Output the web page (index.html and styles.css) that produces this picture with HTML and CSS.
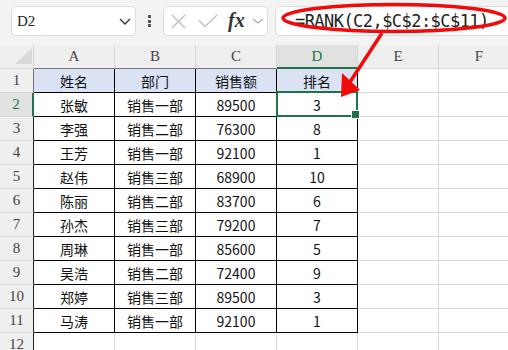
FILE: index.html
```html
<!DOCTYPE html>
<html lang="zh-CN">
<head>
<meta charset="utf-8">
<title>RANK</title>
<link rel="stylesheet" href="styles.css">
</head>
<body>
<div class="app">
  <div class="toolbar">
    <div class="namebox">
      <span class="ref">D2</span>
      <svg class="chev" width="12" height="7" viewBox="0 0 12 7"><polyline points="1,1 6,6 11,1" fill="none" stroke="#333" stroke-width="1.3"/></svg>
    </div>
    <div class="dots"><i></i><i></i><i></i></div>
    <div class="fxbox">
      <svg class="cancel" width="15" height="15" viewBox="0 0 15 15"><path d="M1 1L14 14M14 1L1 14" stroke="#bdbdbd" stroke-width="1.4" fill="none"/></svg>
      <svg class="check" width="20" height="14" viewBox="0 0 20 14"><polyline points="1,6.5 7,12.5 19,1" fill="none" stroke="#c2c2c2" stroke-width="1.5"/></svg>
      <span class="fx">fx</span>
      <svg class="chev-s" width="12" height="6" viewBox="0 0 12 6"><polyline points="1,1 6,5 11,1" fill="none" stroke="#a8a8a8" stroke-width="1.2"/></svg>
    </div>
    <div class="formula">=RANK(C2,$C$2:$C$11)</div>
  </div>

  <div class="sheet">
    <div class="corner"><span class="tri"></span></div>
    <div class="colh">A</div><div class="colh">B</div><div class="colh">C</div><div class="colh sel">D</div><div class="colh">E</div><div class="colh">F</div>

    <div class="rowh r1">1</div>
    <div class="c th">姓名</div><div class="c th">部门</div><div class="c th">销售额</div><div class="c th">排名</div><div class="e"></div><div class="e"></div>

    <div class="rowh sel">2</div>
    <div class="c">张敏</div><div class="c">销售一部</div><div class="c">89500</div><div class="c active">3</div><div class="e"></div><div class="e"></div>

    <div class="rowh">3</div>
    <div class="c">李强</div><div class="c">销售二部</div><div class="c">76300</div><div class="c">8</div><div class="e"></div><div class="e"></div>

    <div class="rowh">4</div>
    <div class="c">王芳</div><div class="c">销售一部</div><div class="c">92100</div><div class="c">1</div><div class="e"></div><div class="e"></div>

    <div class="rowh">5</div>
    <div class="c">赵伟</div><div class="c">销售三部</div><div class="c">68900</div><div class="c">10</div><div class="e"></div><div class="e"></div>

    <div class="rowh">6</div>
    <div class="c">陈丽</div><div class="c">销售二部</div><div class="c">83700</div><div class="c">6</div><div class="e"></div><div class="e"></div>

    <div class="rowh">7</div>
    <div class="c">孙杰</div><div class="c">销售三部</div><div class="c">79200</div><div class="c">7</div><div class="e"></div><div class="e"></div>

    <div class="rowh">8</div>
    <div class="c">周琳</div><div class="c">销售一部</div><div class="c">85600</div><div class="c">5</div><div class="e"></div><div class="e"></div>

    <div class="rowh">9</div>
    <div class="c">吴浩</div><div class="c">销售二部</div><div class="c">72400</div><div class="c">9</div><div class="e"></div><div class="e"></div>

    <div class="rowh">10</div>
    <div class="c">郑婷</div><div class="c">销售三部</div><div class="c">89500</div><div class="c">3</div><div class="e"></div><div class="e"></div>

    <div class="rowh">11</div>
    <div class="c">马涛</div><div class="c">销售一部</div><div class="c">92100</div><div class="c">1</div><div class="e"></div><div class="e"></div>

    <div class="rowh">12</div>
    <div class="e"></div><div class="e"></div><div class="e"></div><div class="e"></div><div class="e"></div><div class="e"></div>
  </div>

  <svg class="annot" width="508" height="350" viewBox="0 0 508 350">
    <ellipse cx="394" cy="18" rx="111" ry="13.5" fill="none" stroke="#f20a0a" stroke-width="3.5"/>
    <line x1="382" y1="33" x2="350" y2="82" stroke="#f20a0a" stroke-width="3.5"/>
    <polygon points="341,97 342,73 360,90" fill="#f20a0a"/>
  </svg>
</div>
</body>
</html>
```

FILE: styles.css
```css
* { box-sizing: border-box; }

html, body {
  margin: 0;
  padding: 0;
  background: #f3f3f3;
}

.app {
  position: relative;
  width: 508px;
  height: 350px;
  overflow: hidden;
  background: #f3f3f3;
}

/* formula bar */
.toolbar {
  height: 45px;
  display: flex;
  align-items: flex-start;
  padding: 6px 0 0 11px;
  white-space: nowrap;
}

.namebox {
  width: 125px;
  height: 30px;
  background: #fff;
  border: 1px solid #dcdcdc;
  border-radius: 5px;
  display: flex;
  align-items: center;
  justify-content: space-between;
  padding: 0 4px 0 5px;
  flex: none;
}

.ref {
  font-family: "Liberation Serif", serif;
  font-size: 15px;
  color: #222;
}

.dots {
  width: 27px;
  height: 30px;
  display: flex;
  flex-direction: column;
  align-items: center;
  justify-content: center;
  gap: 1.7px;
  flex: none;
}

.dots i {
  display: block;
  width: 3px;
  height: 3px;
  background: #555;
}

.fxbox {
  width: 105px;
  height: 30px;
  background: #fff;
  border: 1px solid #dcdcdc;
  border-radius: 5px;
  display: flex;
  align-items: center;
  padding-left: 7px;
  flex: none;
}

.cancel { margin-right: 12px; }
.check { margin-right: 10px; margin-top: -1px; }

.fx {
  font-family: "Liberation Serif", serif;
  font-style: italic;
  font-weight: bold;
  font-size: 20px;
  color: #333;
  margin-right: 7px;
  margin-top: -2px;
}

.formula {
  margin-left: 7px;
  width: 260px;
  height: 30px;
  background: #fff;
  border: 1px solid #dcdcdc;
  border-radius: 5px;
  flex: none;
  display: flex;
  align-items: center;
  padding-left: 19px;
  font-family: "DejaVu Sans Mono", monospace;
  font-size: 17px;
  letter-spacing: -0.55px;
  color: #222;
}

/* sheet */
.sheet {
  display: grid;
  grid-template-columns: 34px repeat(6, 81px);
  grid-auto-rows: 24px;
  background: #fff;
  width: 520px;
}

.corner,
.colh,
.rowh {
  background: #efefef;
  border-right: 1px solid #d8d8d8;
  border-bottom: 1px solid #d8d8d8;
  font-family: "Liberation Serif", serif;
  font-size: 15px;
  color: #444;
  display: flex;
  align-items: center;
  justify-content: center;
}

.corner {
  align-items: flex-end;
  justify-content: flex-end;
  padding: 0 1px 4px 0;
}

.tri {
  width: 0;
  height: 0;
  border-left: 17px solid transparent;
  border-bottom: 16px solid #d9d9d9;
}

.colh:nth-child(-n+5) { border-bottom-color: #777; }

.colh.sel {
  background: #e1e1e1;
  color: #217346;
  border-bottom: 2px solid #217346;
}

.rowh { border-right-color: #222; }
.rowh:last-of-type { border-right-color: #d8d8d8; }
.rowh.r1 { border-right-color: #777; }

.rowh.sel {
  background: #e1e1e1;
  color: #217346;
  border-right: 2px solid #217346;
}

.c,
.e {
  border-right: 1px solid #dadada;
  border-bottom: 1px solid #dadada;
}

.c {
  border-right-color: #000;
  border-bottom-color: #000;
  display: flex;
  align-items: center;
  justify-content: center;
  font-family: "Noto Sans CJK SC", "Noto Sans", sans-serif;
  font-size: 14px;
  color: #111;
}

.c.th { background: #dae2f3; }

.c.active { position: relative; }

.c.active::after {
  content: "";
  position: absolute;
  left: -1px;
  top: -2px;
  right: -1px;
  bottom: -1px;
  border: 2px solid #217346;
}

.c.active::before {
  content: "";
  position: absolute;
  right: -3px;
  bottom: -3px;
  width: 7px;
  height: 7px;
  background: #217346;
  border: 1px solid #fff;
  z-index: 2;
}

.annot {
  position: absolute;
  left: 0;
  top: 0;
  pointer-events: none;
  z-index: 5;
}
```
